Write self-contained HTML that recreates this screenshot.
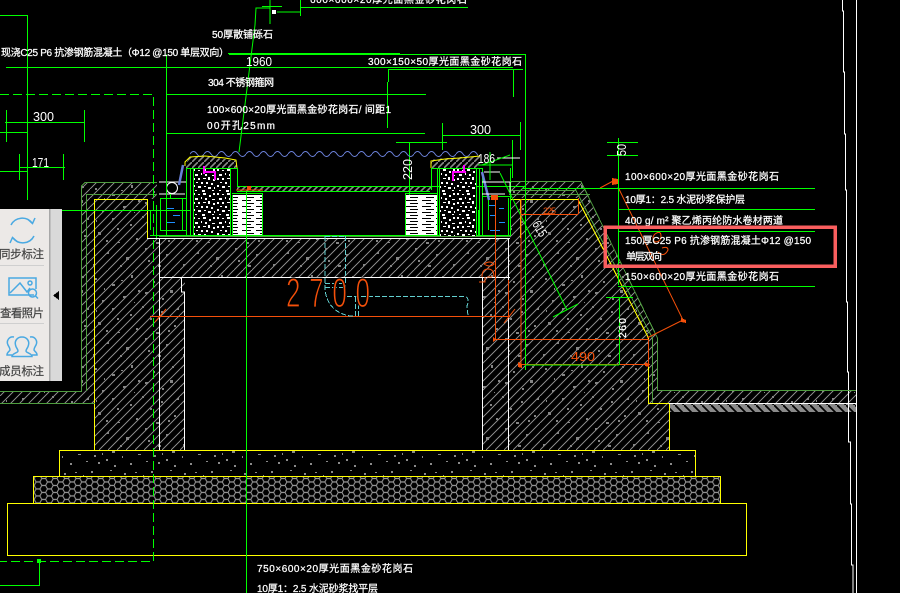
<!DOCTYPE html>
<html><head><meta charset="utf-8"><style>
html,body{margin:0;padding:0;background:#000;width:900px;height:593px;overflow:hidden}
svg{display:block}
text{font-family:"Liberation Sans","Noto Sans CJK SC",sans-serif;fill:#fff;font-size:10px;stroke:#fff;stroke-width:.25}
text.n{font-size:13px;stroke-width:0}
.g{stroke:#0f0;fill:none;stroke-width:1}
.d{stroke:#4f9d3f;fill:none;stroke-width:1}
.y{stroke:#ff0;fill:none;stroke-width:1}
.w{stroke:#fff;fill:none;stroke-width:1}
.o{stroke:#f5500a;fill:none;stroke-width:1}
.c{stroke:#62d0d0;fill:none;stroke-width:1;stroke-dasharray:5 2}
.b{stroke:#1e8fff;stroke-width:1;fill:none}
.s text{font-size:11.5px;fill:#444;stroke:#444;stroke-width:.2}
</style></head><body>
<svg width="900" height="593" viewBox="0 0 900 593" xmlns="http://www.w3.org/2000/svg" shape-rendering="crispEdges">
<defs>
<pattern id="conc" width="90" height="90" patternUnits="userSpaceOnUse">
<path d="M9 0L0 9M18 0L0 18M27 0L0 27M36 0L0 36M45 0L0 45M54 0L0 54M63 0L0 63M72 0L0 72M81 0L0 81M90 0L0 90M90 9L9 90M90 18L18 90M90 27L27 90M90 36L36 90M90 45L45 90M90 54L54 90M90 63L63 90M90 72L72 90M90 81L81 90" stroke="#858585" stroke-width="1" fill="none"/>
<path d="M5 8h2v2h-2zM22 14h3v2h-3zM41 5h2v3h-2zM63 11h2v2h-2zM80 20h3v3h-3zM12 30h2v2h-2zM33 26h3v2h-3zM52 36h2v2h-2zM71 41h2v2h-2zM8 52h3v3h-3zM27 48h2v2h-2zM46 58h2v2h-2zM66 62h3v2h-3zM84 55h2v2h-2zM17 72h2v2h-2zM36 77h3v3h-3zM58 80h2v2h-2zM76 74h2v2h-2zM3 84h2v2h-2zM48 20h2v2h-2zM28 62h2v1h-2zM60 48h2v2h-2zM14 18h1v2h-1zM31 10h2v1h-2zM55 22h3v2h-3zM72 28h2v2h-2zM87 38h2v2h-2zM22 38h2v2h-2zM40 44h2v2h-2zM16 60h2v2h-2zM55 68h2v2h-2zM78 60h2v2h-2zM30 85h2v2h-2zM68 85h3v2h-3zM6 40h1v2h-1zM44 32h1v1h-1zM82 6h2v2h-2z" fill="#858585"/>
</pattern>
<pattern id="grav" width="60" height="26" patternUnits="userSpaceOnUse">
<path d="M4 5h2v2h-2zM18 12h3v1h-3zM31 3h2v2h-2zM46 17h2v2h-2zM52 8h3v3h-3zM38 20h2v2h-2zM10 21h2v2h-2zM26 19h2v1h-2zM15 4h2v1h-2zM54 23h2v2h-2zM42 11h1v2h-1zM23 7h1v1h-1zM50 2h2v1h-2zM2 14h1v2h-1zM34 13h2v2h-2z" fill="#8a8a8a"/>
</pattern>
<pattern id="hex" width="12" height="5.5" patternUnits="userSpaceOnUse" patternTransform="scale(.95 1.27)">
<path d="M0 2.75L2 0H6L8 2.75L6 5.5H2L0 2.75M8 2.75H12" stroke="#999" stroke-width="1" fill="none" shape-rendering="auto"/>
</pattern>
<pattern id="spk" width="24" height="24" patternUnits="userSpaceOnUse">
<rect width="24" height="24" fill="#000"/>
<path d="M1 1h2v2h-2zM6 2h2v1h-2zM11 1h3v2h-3zM17 3h2v2h-2zM21 1h2v2h-2zM3 6h3v2h-3zM9 5h1v2h-1zM13 6h2v2h-2zM20 7h3v1h-3zM1 10h2v2h-2zM6 10h2v2h-2zM11 10h3v1h-3zM16 9h2v3h-2zM21 11h2v2h-2zM4 14h2v1h-2zM9 14h2v2h-2zM14 14h2v2h-2zM19 15h2v2h-2zM1 17h2v2h-2zM6 18h3v2h-3zM12 18h2v1h-2zM16 19h3v2h-3zM22 19h1v2h-1zM3 22h2v1h-2zM10 22h3v2h-3zM20 22h2v1h-2z" fill="#fff"/>
</pattern>
<pattern id="blk" width="30" height="6" patternUnits="userSpaceOnUse">
<rect width="30" height="6" fill="#fff"/>
<path d="M2 2h9v1H2zM16 2h11v1H16zM6 5h8v1H6zM20 5h8v1h-8z" fill="#000"/>
</pattern>
<pattern id="capd" width="6" height="6" patternUnits="userSpaceOnUse">
<path d="M6 0L0 6" stroke="#8a8a8a" stroke-width="1.6" shape-rendering="auto"/>
</pattern>
<pattern id="gband" width="9" height="9" patternUnits="userSpaceOnUse">
<rect width="9" height="9" fill="#8a8a8a"/>
<path d="M0 0L9 9" stroke="#000" stroke-width="1.8" shape-rendering="auto"/>
</pattern>
<pattern id="wave" width="14" height="8" patternUnits="userSpaceOnUse" patternTransform="translate(190 150)">
<path d="M0 4Q3.5 -1 7 4T14 4" stroke="#6a80d8" stroke-width="1" fill="none" shape-rendering="auto"/>
</pattern>
</defs>

<rect width="900" height="593" fill="#000"/>

<!-- fills -->
<path d="M95 199H147V238H510V199H578L648 338V403H669V450H482V277H185V450H95Z" fill="url(#conc)"/>
<path d="M0 391H81V182H157V199H95V403H0Z" fill="url(#conc)"/>
<path d="M510 181H581L657 338V390H856V403H648V338L578 198H510Z" fill="url(#conc)"/>
<rect x="669" y="403" width="187" height="9" fill="url(#gband)"/>
<rect x="59" y="450" width="636" height="26" fill="url(#grav)"/>
<rect x="33" y="476" width="687" height="27" fill="url(#hex)"/>
<rect x="237" y="187" width="195" height="4" fill="url(#capd)"/>

<!-- foundation -->
<rect x="7.500" y="503.500" width="739" height="52" class="y"/>
<rect x="33.500" y="476.500" width="687" height="27" class="y"/>
<rect x="59.500" y="450.500" width="636" height="26" class="y"/>
<path class="y" d="M94.500 450V199.500H147.500V238M510 199.500H578L648.500 338V403.500H669.500V450M520.500 199V238"/>
<path class="y" shape-rendering="auto" stroke-width="1.300" d="M578 199.500L648.500 338"/>

<!-- white structure -->
<path class="w" d="M147 238.500H510M159.500 238V450M159 277.500H510M181.500 277V292H184.500V450M482.500 277V450M508.500 238V450M669 403.500H856"/>
<path class="w" d="M842.500 0V11H843.500V72H844.500V134H845.500V190H846.500V302H847.500V372H848.500V442H850.500V504H851.500V565H853V593M856.500 0V593"/>

<!-- green dark layers -->
<path class="d" d="M0 391.500H81.500V186L85 182.500H157M86.500 391V194.500H157M0 403.500H95M510 181.500H581L657.500 338V390.500H856M510 190.500H576L652.500 338V403M510 194.500H590"/>
<path class="d" d="M159 236.500H510"/>

<!-- top-left green lines -->
<path class="g" d="M0 15.500H27.500V200M6 67.500H513M229 54.500H525.500V370M166.500 54.500V236M166 94.500H426M166 133.500H425"/>
<path class="g" d="M228 53.500H400"/>
<path class="g" stroke-dasharray="9 4" d="M0 94.500H153.500V561.500H0"/>
<path class="g" d="M6.500 110V142M84.500 110V142M5 122.500H84M0 132.500H28M19.500 154V180M63.500 154V180M19 167.500H65M0 171.500H28"/>
<path class="g" d="M39.500 561V585.500H0"/>
<rect x="37" y="559" width="4" height="4" fill="#0f0"/>
<path class="g" d="M246.500 200V593M62 210.500H190"/>
<path class="g" shape-rendering="auto" d="M239 152L255 25L256 8H270M270 0V24M262 6.500H282M277 12H300"/>
<rect x="272" y="10" width="4" height="4" fill="#fff"/>
<path class="g" d="M300.500 0V16M300 7.500H468M388.500 69V82M387.500 82V128M513.500 69V97M388 69.500H523M442.500 123V150M520.500 122V150M442 135.500H520M396 142.500H447M409.500 142V200"/>

<!-- wave -->
<rect x="190" y="150" width="288" height="8" fill="url(#wave)"/>

<!-- left planter -->
<path d="M186 168V163L190 157L205 156L237 161V168Z" fill="url(#capd)"/>
<path class="y" shape-rendering="auto" d="M185 166V162L190 157L205 156L225 158L236 160L237 168"/>
<rect x="193" y="169" width="37" height="67" fill="url(#spk)"/>
<rect x="232" y="195" width="30" height="40" fill="url(#blk)"/>
<path class="g" d="M186 168.500H237M186.500 168V236M190.500 168V236M193.500 168V236M230.500 168V236M232.500 195V236M237.500 168V187M262.500 193V236M232 193.500H263M237 186.500H525M237 191.500H430M150 235.500H510M246.500 192V236"/>
<path d="M203 166h2v8h-2zM203 171h13v2h-13zM214 171h2v9h-2z" fill="#f0f"/>
<path class="o" stroke-width="2" d="M236 190H263"/>
<rect x="247" y="186" width="4" height="4" fill="#f5500a"/>
<!-- left device -->
<path class="w" stroke-width="1.500" d="M159 182H186M159 194H185"/>
<circle cx="172" cy="188" r="5.500" class="w" shape-rendering="auto"/>
<path d="M183 165L179 185" stroke="#6a80d8" stroke-width="2.500" shape-rendering="auto" fill="none"/>
<path class="g" d="M160 198.500H186M160 230.500H186M160.500 198V230M182.500 198V230M166.500 150V200M150.500 210V230M156.500 205V238M170.500 194V198"/>
<path class="b" d="M167 208.500H174M173 215.500H180M167 222.500H175"/>

<!-- right planter -->
<path d="M431 168V160L445 158L480 156V168Z" fill="url(#capd)"/>
<path class="y" shape-rendering="auto" d="M431 168V161L445 159L460 158L480 156"/>
<rect x="439" y="169" width="37" height="67" fill="url(#spk)"/>
<rect x="406" y="195" width="31" height="40" fill="url(#blk)"/>
<path class="g" d="M431 168.500H482M405 193.500H437M405.500 193V236M437.500 168V236M439.500 168V236M431.500 168V190M476.500 168V236M479.500 168V236M482.500 168V236M482 196.500H510"/>
<path d="M452 171h14v2h-14zM452 171h2v10h-2zM463 165h2v6h-2z" fill="#f0f"/>
<path class="g" d="M478.500 210V236M488.500 198V230M508.500 198V236M510.500 168V236M512.500 140V178"/>
<path class="b" d="M489 205.500H496M499 208.500H504M490 215.500H496M499 222.500H505M490 230.500H500"/>
<path d="M482 172L489 200" stroke="#6a80d8" stroke-width="2.500" shape-rendering="auto" fill="none"/>
<path class="w" stroke-width="1.500" d="M497 158H520M484 172H500M482 182H510M482 194H505M510 182V195"/>
<path class="g" shape-rendering="auto" d="M478 165H512M500 173L567 310M553 317L578 304M490 152V180M482 165L510 155"/>

<!-- orange dims -->
<path class="o" d="M150 316.500H510M495.500 197V340M495 339.500H648M508.500 280V316M521 199V364M521 214.500H578M578.500 198V214M648.500 339V365"/>
<path class="o" stroke-width="1.500" d="M519 364.500H650"/>
<path class="o" shape-rendering="auto" stroke-width="1.500" d="M504 323L515 309M155 322L166 309"/>
<path class="o" shape-rendering="auto" d="M600 188L615 180M618 187L683 320L647 338"/>
<path d="M612 178l6 1v5l-6 1zM681 318l5 2v3l-5-1zM518 362l4 2v4l-4-1zM645 362l4 2v3l-4-1zM493 337l3 3-3 2zM491 195h7v5h-7z" fill="#f5500a"/>
<path class="o" shape-rendering="auto" d="M484 264q6-4 10 0q-4 4-10 0M482 277q0-8 6-8t6 8M479 282H485V277M487 277H492"/>
<path class="o" shape-rendering="auto" d="M655 234q6-4 6 2t-6 6q-4-4 0-8M662 248q6-2 6 2q-4 8-10 2"/>

<!-- cyan dashed -->
<path class="c" d="M325 236V290Q328 312 350 316H354M345.500 236V296M325 283.500H345M325 287.500H345M325 236.500H345M347 296.500H465Q470 298 467 306L468 316M355.500 297V317M358.500 297V317"/>

<!-- big 2700 -->
<text transform="translate(286 307) scale(.62 1)" style="font-size:42px;fill:#f5500a;stroke:#000;stroke-width:1.200;letter-spacing:14px" shape-rendering="auto">2700</text>

<!-- right green lines -->
<path class="g" d="M618.500 138V285M607 142.500H638M607 155.500H638M618 188.500H815M618 209.500H815M618 231.500H815M618 286.500H815M606 297.500H633M619.500 297V365M522 188.500H618M525.500 365H619"/>

<!-- texts -->
<text x="310" y="3" textLength="157">600×600×20厚光面黑金砂花岗石</text>
<text x="212" y="38" textLength="61">50厚散铺砾石</text>
<text x="1" y="56" textLength="228">现浇C25 P6 抗渗钢筋混凝土（Φ12 @150 单层双向）</text>
<text class="n" x="246" y="66" textLength="26" lengthAdjust="spacingAndGlyphs">1960</text>
<text x="368" y="65" textLength="154">300×150×50厚光面黑金砂花岗石</text>
<text x="208" y="86" textLength="66">304 不锈钢箍网</text>
<text x="207" y="113" textLength="184">100×600×20厚光面黑金砂花岗石/ 间距1</text>
<text x="207" y="129" textLength="68">00开孔25mm</text>
<text class="n" x="33" y="121" textLength="21" lengthAdjust="spacingAndGlyphs">300</text>
<text class="n" x="32" y="167" textLength="17" lengthAdjust="spacingAndGlyphs">171</text>
<text class="n" x="470" y="134" textLength="21" lengthAdjust="spacingAndGlyphs">300</text>
<text class="n" x="478" y="163" textLength="17" lengthAdjust="spacingAndGlyphs">186</text>
<text class="n" transform="translate(412 180) rotate(-90)" textLength="21" lengthAdjust="spacingAndGlyphs">220</text>
<text class="n" transform="translate(626 156) rotate(-90)" textLength="12" lengthAdjust="spacingAndGlyphs">50</text>
<text class="n" transform="translate(532 224) rotate(60)" textLength="16" lengthAdjust="spacingAndGlyphs">615</text>
<text transform="translate(626 338) rotate(-90)" textLength="20">260</text>
<text x="625" y="180" textLength="154">100×600×20厚光面黑金砂花岗石</text>
<text x="625" y="203" textLength="120">10厚1：2.5 水泥砂浆保护层</text>
<text x="625" y="224" textLength="158">400 g/ m² 聚乙烯丙纶防水卷材两道</text>
<text x="625" y="244" textLength="186">150厚C25 P6 抗渗钢筋混凝土Φ12 @150</text>
<text x="626" y="260" textLength="36">单层双向</text>
<text x="625" y="280" textLength="154">150×600×20厚光面黑金砂花岗石</text>
<text x="257" y="572" textLength="156">750×600×20厚光面黑金砂花岗石</text>
<text x="257" y="592" textLength="121">10厚1：2.5 水泥砂浆找平层</text>
<text x="571" y="361" textLength="24" lengthAdjust="spacingAndGlyphs" style="fill:#f5500a;stroke-width:0;font-size:13px">490</text>
<text x="543" y="214" textLength="13" style="fill:#f5500a;stroke-width:0;font-size:9px">225</text>

<!-- red box -->
<rect x="605" y="227" width="230" height="39" fill="none" stroke="#f95e5e" stroke-width="3.500"/>

<!-- sidebar -->
<g class="s">
<rect x="0" y="209" width="62" height="172" fill="#ece9e7"/>
<rect x="50" y="209" width="12" height="172" fill="#d9d9d9"/>
<rect x="49" y="209" width="1.500" height="172" fill="#a8a8a8"/>
<rect x="0" y="265" width="44" height="1" fill="#cfcfcf"/>
<rect x="0" y="323" width="44" height="1" fill="#cfcfcf"/>
<path d="M59 291V300L53 295.500Z" fill="#000"/>
<g fill="none" stroke="#4aa9e2" stroke-width="1.500" shape-rendering="auto">
<path d="M11 225A12.500 12.500 0 0 1 32 223"/><path d="M28 219.500L32.500 223.500L35 218"/>
<path d="M34 236A12.500 12.500 0 0 1 13 238"/><path d="M17 241.500L12.500 237.500L10 243"/>
<path d="M34 295H9V278H36V289"/>
<path d="M10 293L20 283L27 292L30 288"/>
<circle cx="30" cy="283" r="2"/>
<circle cx="32.500" cy="293" r="4"/><path d="M35.500 296L38 298.500"/>
<path d="M22 337C17 337 14.500 341 15.500 345C16 348 18 349 18 351C18 353 12 353 12 356.500H32C32 353 26 353 26 351C26 349 28 348 28.500 345C29.500 341 27 337 22 337Z"/>
<path d="M14 337C9 336 6 341 8 345C9 347 10 348 10 350C10 351 7 352 7 355H12"/>
<path d="M30 337C35 336 38 341 36 345C35 347 34 348 34 350C34 351 37 352 37 355H32"/>
</g>
<text x="-1" y="258" textLength="45">同步标注</text>
<text x="0" y="317" textLength="44">查看照片</text>
<text x="-1" y="375" textLength="45">成员标注</text>
</g>
</svg>
</body></html>
